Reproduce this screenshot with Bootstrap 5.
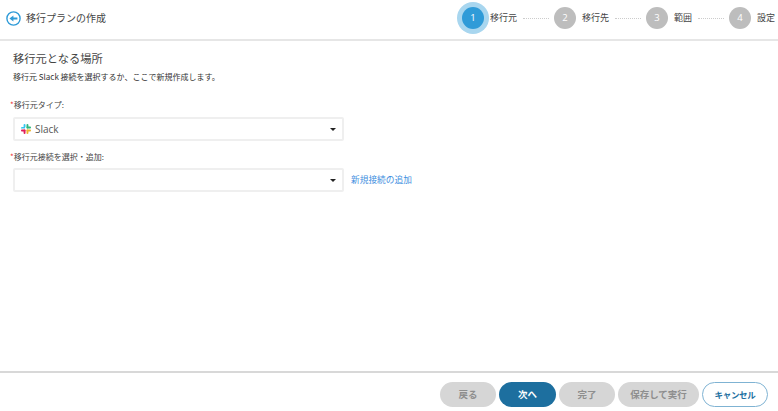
<!DOCTYPE html>
<html lang="ja"><head><meta charset="utf-8"><title>移行プランの作成</title>
<link href="https://cdn.jsdelivr.net/npm/bootstrap@5.3.0/dist/css/bootstrap.min.css" rel="stylesheet">
<style>
html,body{height:100%;}
body{font-family:"Noto Sans CJK JP","Open Sans",sans-serif;color:#444;background:#fff;overflow:hidden;font-size:9.5px;}
.shell{height:411px;}
.topbar{height:41px;border-bottom:2px solid #e6e6e6;padding:0 3px 3px 6px;}
.page-title{font-size:10px;color:#444;margin:0 0 0 5px;font-weight:400;}
.stepnum{width:22px;height:22px;border-radius:50%;background:#bdbdbd;color:#fff;font-size:9.5px;font-family:"Open Sans",sans-serif;margin-right:6px;}
.stepnum.on{background:#2f9bd8;box-shadow:0 0 0 5px #a8d6ef;}
.steplabel{font-size:9px;color:#444;}
.stepdots{width:26px;border-top:1px dotted #ccc;height:0;margin:0 5px 0 6px;}
.main-area{padding:8px 13px 0;}
.sec-title{font-size:11.25px;font-weight:400;color:#444;margin:0;line-height:18px;}
.sec-desc{font-size:8px;color:#333;margin:4px 0 0;line-height:12px;}
.fld-label{font-size:8px;color:#444;line-height:12px;margin-left:-3px;}
.fld-label i{color:#e33;font-style:normal;}
.lbl-first{margin-top:16px;}
.lbl-second{margin-top:10px;}
.sel-box{width:331px;height:24px;border:2px solid #efefef;border-radius:2px;padding:0 6px;font-size:10px;color:#555;font-family:"Open Sans",sans-serif;}
.box-first{margin-top:6px;}
.row-second{margin-top:5px;}
.caret-dn{width:0;height:0;border-left:3px solid transparent;border-right:3px solid transparent;border-top:3.5px solid #222;}
.addlink{font-size:8.7px;color:#3f8fe0;text-decoration:none;margin-left:7px;}
.footbar{height:40px;border-top:2px solid #d8d8d8;padding:5px 10px 0 0;gap:3px;}
.pillbtn{height:25px;border-radius:13px;font-size:9.5px;font-weight:700;border:0;padding:0;background:#d6d6d6;color:#8e8e8e;}
.pillbtn.pri{background:#1d6f9f;color:#fff;}
.pillbtn.out{background:#fff;color:#1d6f9f;border:1px solid #7fb3d3;font-size:8.5px;letter-spacing:-.3px;}
.w-back,.w-done{width:56px;}
.w-next{width:57px;}
.w-save{width:81px;}
.w-cancel{width:66px;}
</style></head>
<body>
<div class="shell d-flex flex-column">
 <header class="topbar d-flex align-items-center justify-content-between">
  <div class="d-flex align-items-center">
   <svg width="15" height="15" viewBox="0 0 15 15"><circle cx="7.5" cy="7.5" r="6.6" fill="#fff" stroke="#2f9bd8" stroke-width="1.4"/><path d="M3.4 7.5 7.4 4.4v2h4v2.2h-4v2z" fill="#2f9bd8"/></svg>
   <h1 class="page-title">移行プランの作成</h1>
  </div>
  <div class="d-flex align-items-center">
   <span class="stepnum on d-flex align-items-center justify-content-center">1</span><span class="steplabel">移行元</span><span class="stepdots"></span>
   <span class="stepnum d-flex align-items-center justify-content-center">2</span><span class="steplabel">移行先</span><span class="stepdots"></span>
   <span class="stepnum d-flex align-items-center justify-content-center">3</span><span class="steplabel">範囲</span><span class="stepdots"></span>
   <span class="stepnum d-flex align-items-center justify-content-center">4</span><span class="steplabel">設定</span>
  </div>
 </header>
 <main class="main-area flex-grow-1">
  <h2 class="sec-title">移行元となる場所</h2>
  <p class="sec-desc">移行元 Slack 接続を選択するか、ここで新規作成します。</p>
  <div class="fld-label lbl-first"><i>*</i>移行元タイプ:</div>
  <div class="sel-box box-first d-flex align-items-center justify-content-between">
   <span class="d-flex align-items-center gap-1">
    <svg width="10" height="10" viewBox="0 0 10 10"><path d="M0 4h4V2.5H1.2A1.2 1.2 0 0 0 0 4z" fill="#36c5f0" transform="translate(0 .5)"/><rect x="2.6" y="0" width="1.9" height="3.6" rx=".9" fill="#36c5f0"/><rect x="5.5" y="0" width="1.9" height="4.5" rx=".9" fill="#2eb67d"/><rect x="5.5" y="2.6" width="4.5" height="1.9" rx=".9" fill="#2eb67d"/><rect x="5.5" y="5.5" width="4.5" height="1.9" rx=".9" fill="#ecb22e"/><rect x="5.5" y="5.5" width="1.9" height="4.5" rx=".9" fill="#ecb22e"/><rect x="0" y="5.5" width="4.5" height="1.9" rx=".9" fill="#e01e5a"/><rect x="2.6" y="5.5" width="1.9" height="4.5" rx=".9" fill="#e01e5a"/></svg>
    Slack</span>
   <span class="caret-dn"></span>
  </div>
  <div class="fld-label lbl-second"><i>*</i>移行元接続を選択・追加:</div>
  <div class="row-second d-flex align-items-center">
   <div class="sel-box d-flex align-items-center justify-content-end"><span class="caret-dn"></span></div>
   <a href="#" class="addlink">新規接続の追加</a>
  </div>
 </main>
 <footer class="footbar d-flex align-items-center justify-content-end">
  <button class="pillbtn w-back">戻る</button>
  <button class="pillbtn pri w-next">次へ</button>
  <button class="pillbtn w-done">完了</button>
  <button class="pillbtn w-save">保存して実行</button>
  <button class="pillbtn out w-cancel">キャンセル</button>
 </footer>
</div>
</body></html>
